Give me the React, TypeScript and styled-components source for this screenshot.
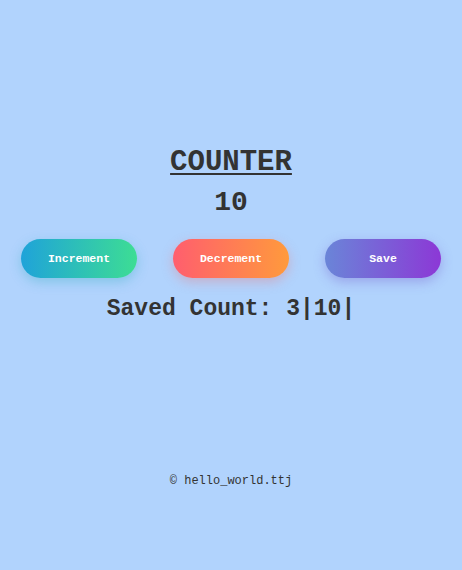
import { useState } from "react";
import styled, { createGlobalStyle } from "styled-components";

const GlobalStyle = createGlobalStyle`
  html, body {
    margin: 0;
    padding: 0;
    background: #b1d3fd;
  }
  body {
    font-family: "Liberation Mono", "Courier New", monospace;
    color: #333;
  }
`;

const Page = styled.div`
  display: flex;
  flex-direction: column;
  align-items: center;
  min-height: 570px;
  box-sizing: border-box;
  padding: 146px 0 81px;
`;

const Titulo = styled.h1`
  margin: 0;
  font-size: 29px;
  line-height: 34px;
  font-weight: 700;
  text-decoration: underline;
  text-decoration-thickness: 2px;
  text-underline-offset: 3px;
`;

const Contador = styled.div`
  margin-top: 6px;
  font-size: 28px;
  line-height: 34px;
  font-weight: 700;
`;

const Linha = styled.div`
  display: flex;
  justify-content: space-between;
  align-self: stretch;
  padding: 0 21px;
  margin-top: 19px;
`;

const Botao = styled.button<{ $de: string; $ate: string; $sombra: string }>`
  width: 116px;
  height: 39px;
  border: none;
  border-radius: 20px;
  background: linear-gradient(90deg, ${(p) => p.$de}, ${(p) => p.$ate});
  box-shadow: 0 4px 12px ${(p) => p.$sombra};
  color: #fff;
  font-family: "Liberation Mono", "Courier New", monospace;
  font-weight: 700;
  font-size: 11.5px;
  cursor: pointer;
`;

const Salvos = styled.p`
  margin: 16px 0 0;
  font-size: 23px;
  line-height: 30px;
  font-weight: 700;
`;

const Rodape = styled.footer`
  margin-top: auto;
  font-size: 12px;
  line-height: 16px;
`;

export default function App() {
  const [contagem, setContagem] = useState(10);
  const [salvos, setSalvos] = useState<number[]>([3, 10]);

  return (
    <>
      <GlobalStyle />
      <Page>
        <Titulo>COUNTER</Titulo>
        <Contador>{contagem}</Contador>
        <Linha>
          <Botao
            $de="#1fa3d9"
            $ate="#3ddd94"
            $sombra="rgba(40, 170, 190, 0.35)"
            onClick={() => setContagem(contagem + 1)}
          >
            Increment
          </Botao>
          <Botao
            $de="#ff5e6e"
            $ate="#ff9a3c"
            $sombra="rgba(240, 110, 110, 0.35)"
            onClick={() => setContagem(contagem - 1)}
          >
            Decrement
          </Botao>
          <Botao
            $de="#6a85d8"
            $ate="#8c38d6"
            $sombra="rgba(110, 80, 200, 0.35)"
            onClick={() => setSalvos([...salvos, contagem])}
          >
            Save
          </Botao>
        </Linha>
        <Salvos>Saved Count: {salvos.map((s) => `${s}|`).join("")}</Salvos>
        <Rodape>© hello_world.ttj</Rodape>
      </Page>
    </>
  );
}
